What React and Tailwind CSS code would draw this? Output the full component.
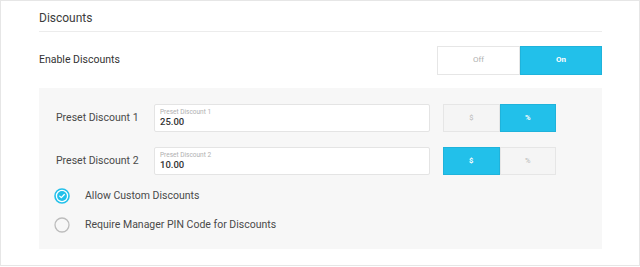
import React from "react";

const CYAN = "#22c0ea";

function Seg({ left, right, active, w, h, fs }) {
  return (
    <div className={`flex ${w} ${h}`}>
      {[left, right].map((t, i) => {
        const on = active === i;
        return (
          <div
            key={i}
            className={`flex-1 flex items-center justify-center ${fs} ${
              on
                ? "bg-[#22c0ea] border border-[#1fb3db] text-white font-bold"
                : "bg-[#f5f5f5] border border-[#e6e6e6] text-[#b8b8b8]"
            }`}
          >
            {t}
          </div>
        );
      })}
    </div>
  );
}

function Field({ label, value }) {
  return (
    <div className="w-[276px] h-[28px] bg-white border border-[#e4e4e4] rounded-[2px] pl-[5px] flex flex-col justify-center">
      <div className="text-[6.5px] leading-[8px] text-[#b0b0b0]">{label}</div>
      <div className="text-[9.5px] leading-[12px] text-[#333] font-medium">{value}</div>
    </div>
  );
}

function Radio({ checked }) {
  return (
    <svg width="16" height="16" viewBox="0 0 16 16">
      {checked ? (
        <>
          <circle cx="8" cy="8" r="7" fill="#fff" stroke={CYAN} strokeWidth="1.6" />
          <circle cx="8" cy="8" r="4.9" fill={CYAN} />
          <path d="M5.7 8.1 L7.3 9.6 L10.3 6.5" fill="none" stroke="#fff" strokeWidth="1.3" strokeLinecap="round" strokeLinejoin="round" />
        </>
      ) : (
        <circle cx="8" cy="8" r="7" fill="none" stroke="#bcbcbc" strokeWidth="1.3" />
      )}
    </svg>
  );
}

export default function App() {
  return (
    <div
      className="w-[640px] h-[266px] border border-[#e6e6e6] bg-white"
      style={{ fontFamily: "Roboto, 'Liberation Sans', sans-serif" }}
    >
      <div className="ml-[38px] w-[563px]">
        <div className="h-[31px] pt-[4px] flex items-center border-b border-[#ececec]">
          <span className="text-[12px] text-[#3c3c3c]">Discounts</span>
        </div>
        <div className="h-[56px] flex items-center justify-between">
          <span className="text-[10.5px] text-[#333]">Enable Discounts</span>
          <div className="flex w-[165px] h-[29px]">
            <div className="w-[83px] flex items-center justify-center bg-white border border-[#e6e6e6] text-[8px] text-[#b0b0b0]">
              Off
            </div>
            <div className="flex-1 flex items-center justify-center bg-[#22c0ea] border border-[#1fb3db] text-[8px] text-white font-bold">
              On
            </div>
          </div>
        </div>
        <div className="h-[161px] bg-[#f7f7f7] pt-[16px] pl-[17px]">
          <div className="flex items-center h-[28px]">
            <div className="w-[98px] text-[10.5px] text-[#4a4a4a]">Preset Discount 1</div>
            <Field label="Preset Discount 1" value="25.00" />
            <div className="ml-[13px]">
              <Seg left="$" right="%" active={1} w="w-[113px]" h="h-[28px]" fs="text-[7.5px]" />
            </div>
          </div>
          <div className="flex items-center h-[28px] mt-[15px]">
            <div className="w-[98px] text-[10.5px] text-[#4a4a4a]">Preset Discount 2</div>
            <Field label="Preset Discount 2" value="10.00" />
            <div className="ml-[13px]">
              <Seg left="$" right="%" active={0} w="w-[113px]" h="h-[28px]" fs="text-[7.5px]" />
            </div>
          </div>
          <div className="flex items-center h-[16px] mt-[13px] -ml-[2px]">
            <Radio checked />
            <span className="ml-[15px] text-[10.5px] text-[#4a4a4a]">Allow Custom Discounts</span>
          </div>
          <div className="flex items-center h-[16px] mt-[13px] -ml-[2px]">
            <Radio />
            <span className="ml-[15px] text-[10.5px] text-[#4a4a4a]">Require Manager PIN Code for Discounts</span>
          </div>
        </div>
      </div>
    </div>
  );
}
